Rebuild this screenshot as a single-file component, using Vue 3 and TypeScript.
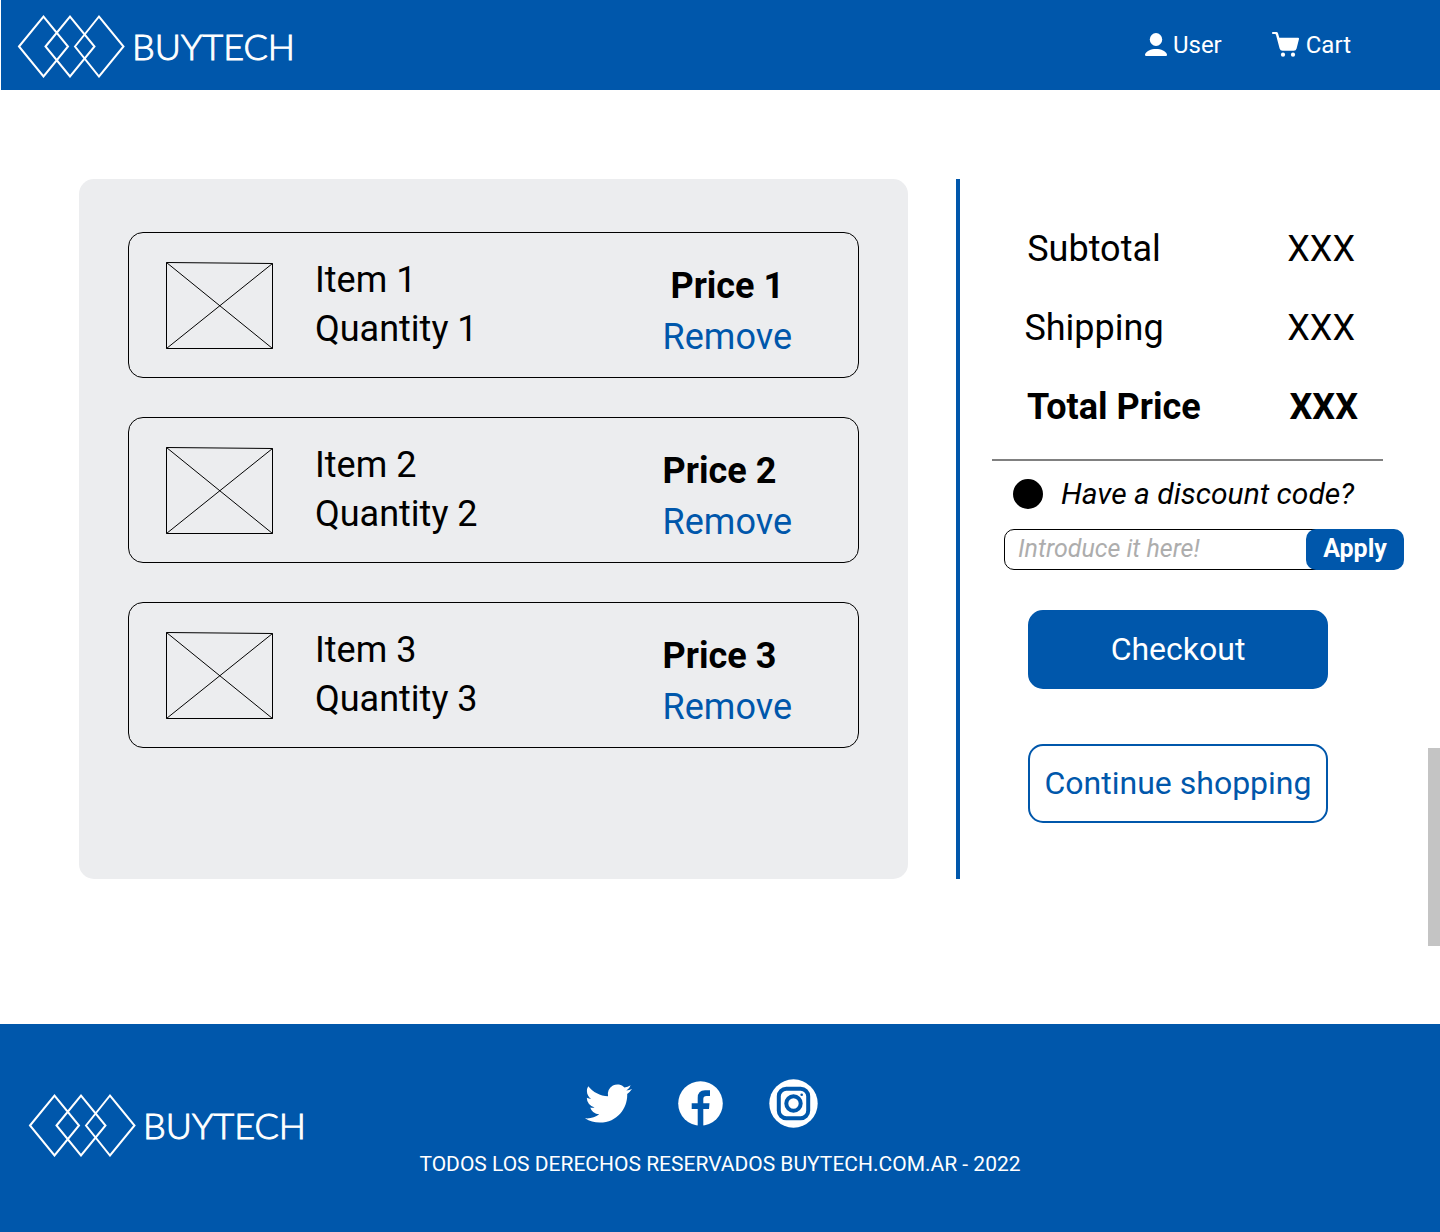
<script setup lang="ts">
import { ref } from 'vue'

interface CartItem {
  id: number
  name: string
  quantity: string
  price: string
  align: 'center' | 'start'
}

interface SummaryLine {
  label: string
  value: string
  total: boolean
}

const items = ref<CartItem[]>([
  { id: 1, name: 'Item 1', quantity: 'Quantity 1', price: 'Price 1', align: 'center' },
  { id: 2, name: 'Item 2', quantity: 'Quantity 2', price: 'Price 2', align: 'start' },
  { id: 3, name: 'Item 3', quantity: 'Quantity 3', price: 'Price 3', align: 'start' },
])

const summary: SummaryLine[] = [
  { label: 'Subtotal', value: 'XXX', total: false },
  { label: 'Shipping', value: 'XXX', total: false },
  { label: 'Total Price', value: 'XXX', total: true },
]

const hasDiscount = ref(true)
const discountCode = ref('')

function removeItem(id: number): void {
  items.value = items.value.filter((item) => item.id !== id)
}
</script>

<template>
  <div class="page">
    <header class="header">
      <a class="logo" href="#">
        <svg class="logo-mark" viewBox="0 0 108 64" aria-hidden="true">
          <path d="M2 32.500 26.500 2.500 51 32.500 26.500 62.500Z M28.500 32.500 53 2.500 77.500 32.500 53 62.500Z M58 32.500 82 2.500 106.500 32.500 82 62.500Z" />
        </svg>
        <span class="logo-text">BUYTECH</span>
      </a>
      <nav class="nav">
        <a class="nav-link" href="#">
          <svg width="22" height="24" viewBox="0 0 22 24" aria-hidden="true">
            <ellipse cx="11" cy="6.500" rx="6.200" ry="6.500" />
            <path d="M0 21.500C1 18 6 16 11 16s10 2 11 5.500c0 1-.5 1.500-1.500 1.500h-19C.5 23 0 22.500 0 21.500Z" />
          </svg>
          User
        </a>
        <a class="nav-link" href="#">
          <svg width="28" height="28" viewBox="0 0 28 28" aria-hidden="true">
            <path d="M.8 1H4.500Q5.600 1 6 2.200L7.300 6.800H26Q27.300 6.800 27 8.100L24.600 17.500Q24 19.800 21.800 19.800H10.500Q8.300 19.800 7.600 17.600L4.100 4.200Q3.800 2.900 3 2.900H.8Q0 2.900 0 2T.8 1Z" />
            <circle cx="11" cy="23.700" r="2.100" />
            <circle cx="21" cy="23.700" r="2.100" />
          </svg>
          Cart
        </a>
      </nav>
    </header>

    <main class="main">
      <section class="cart" aria-label="Cart">
        <article v-for="item in items" :key="item.id" class="card">
          <svg class="thumb" viewBox="0 0 107 87" aria-hidden="true">
            <path d="M.5 .5 106.500 1.500V86.500H.5ZL106.500 86.500M.5 86.500 106.500 1.500" />
          </svg>
          <div class="info">
            <span>{{ item.name }}</span>
            <span>{{ item.quantity }}</span>
          </div>
          <div class="cost">
            <strong :class="['price', item.align]">{{ item.price }}</strong>
            <button class="remove" type="button" @click="removeItem(item.id)">Remove</button>
          </div>
        </article>
      </section>

      <aside class="summary">
        <dl class="totals">
          <div v-for="line in summary" :key="line.label" :class="['line', { total: line.total }]">
            <dt>{{ line.label }}</dt>
            <dd>{{ line.value }}</dd>
          </div>
        </dl>
        <label class="discount">
          <input v-model="hasDiscount" type="checkbox" />
          Have a discount code?
        </label>
        <form class="code" @submit.prevent>
          <input v-model="discountCode" type="text" aria-label="Discount code" placeholder="Introduce it here!" />
          <button type="submit">Apply</button>
        </form>
        <div class="actions">
          <button class="action primary" type="button">Checkout</button>
          <button class="action" type="button">Continue shopping</button>
        </div>
      </aside>
      <div class="scroll-thumb"></div>
    </main>

    <footer class="footer">
      <a class="logo" href="#">
        <svg class="logo-mark" viewBox="0 0 108 64" aria-hidden="true">
          <path d="M2 32.500 26.500 2.500 51 32.500 26.500 62.500Z M28.500 32.500 53 2.500 77.500 32.500 53 62.500Z M58 32.500 82 2.500 106.500 32.500 82 62.500Z" />
        </svg>
        <span class="logo-text">BUYTECH</span>
      </a>
      <div class="footer-center">
        <div class="social">
          <a href="#" aria-label="Twitter">
            <svg width="47" height="47" viewBox="0 0 24 24">
              <path d="M23.953 4.570a10 10 0 01-2.825.775 4.958 4.958 0 002.163-2.723c-.951.555-2.005.959-3.127 1.184a4.920 4.920 0 00-8.384 4.482C7.690 8.095 4.067 6.130 1.640 3.162a4.822 4.822 0 00-.666 2.475c0 1.710.870 3.213 2.188 4.096a4.904 4.904 0 01-2.228-.616v.060a4.923 4.923 0 003.946 4.827 4.996 4.996 0 01-2.212.085 4.936 4.936 0 004.604 3.417 9.867 9.867 0 01-6.102 2.105c-.390 0-.779-.023-1.170-.067a13.995 13.995 0 007.557 2.209c9.053 0 13.998-7.496 13.998-13.985 0-.210 0-.420-.015-.630A9.935 9.935 0 0024 4.590z" />
            </svg>
          </a>
          <a href="#" aria-label="Facebook">
            <svg width="45" height="45" viewBox="0 0 45 45">
              <circle cx="22.500" cy="22.500" r="22.300" />
              <path class="cut" d="M19.700 45V28H13.700V22.300H19.700V17Q19.700 9.300 27 9.300H32V15H28.500Q25.300 15 25.300 18V22.300H31.500L31 28H25.300V45Z" />
            </svg>
          </a>
          <a href="#" aria-label="Instagram">
            <svg width="49" height="49" viewBox="0 0 49 49">
              <circle cx="24.500" cy="24.500" r="24.200" />
              <rect class="ring" x="9.800" y="9.800" width="29.400" height="29.400" rx="7.500" />
              <circle class="ring" cx="24.500" cy="24.500" r="7.200" />
              <circle class="cut" cx="32.700" cy="15.800" r="1.300" />
            </svg>
          </a>
        </div>
        <p class="rights">TODOS LOS DERECHOS RESERVADOS BUYTECH.COM.AR - 2022</p>
      </div>
    </footer>
  </div>
</template>

<style>
body {
  margin: 0;
  background: #fff;
}
</style>

<style scoped>
.page {
  --blue: #0057ab;
  display: flex;
  flex-direction: column;
  min-height: 100vh;
  font-family: Roboto, sans-serif;
  color: #000;
}

.page *,
.page *::before {
  box-sizing: border-box;
}

button,
input {
  margin: 0;
  font-family: inherit;
}

button {
  cursor: pointer;
}

a {
  color: inherit;
  text-decoration: none;
}

.header {
  display: flex;
  align-items: center;
  justify-content: space-between;
  height: 90px;
  margin-left: 1px;
  padding: 2px 89px 0 16px;
  background: var(--blue);
  color: #fff;
}

.logo {
  display: flex;
  align-items: center;
  gap: 7px;
}

.logo-mark {
  width: 108px;
  height: 64px;
  fill: none;
  stroke: #fff;
  stroke-width: 2;
}

.logo-text {
  font-family: Lato, sans-serif;
  font-size: 36px;
  font-weight: 300;
  line-height: 48px;
  -webkit-text-stroke: 1px #fff;
}

.nav {
  display: flex;
  gap: 50px;
  margin-top: -2px;
}

.nav-link {
  display: flex;
  align-items: center;
  gap: 6px;
  font-size: 24px;
  line-height: 28px;
}

.nav-link svg {
  fill: #fff;
}

.main {
  position: relative;
  display: flex;
  flex: 1;
  align-items: flex-start;
  gap: 48px;
  padding: 89px 0 145px 79px;
}

.cart {
  display: flex;
  flex: 1;
  flex-direction: column;
  gap: 39px;
  min-height: 700px;
  padding: 53px 49px;
  border-radius: 15px;
  background: #ecedef;
}

.card {
  display: flex;
  align-items: flex-start;
  height: 146px;
  padding: 0 66px 0 37px;
  border: 1px solid #000;
  border-radius: 15px;
  font-size: 36px;
}

.thumb {
  width: 107px;
  height: 87px;
  margin-top: 29px;
  fill: none;
  stroke: #000;
  stroke-width: 1;
}

.info {
  display: flex;
  flex-direction: column;
  margin: 23px auto 0 42px;
  line-height: 49px;
}

.cost {
  display: flex;
  flex-direction: column;
  margin-top: 28px;
  line-height: 51px;
}

.price {
  font-weight: 700;
}

.center {
  text-align: center;
}

.start {
  text-align: left;
}

.remove {
  padding: 0;
  border: 0;
  background: none;
  color: var(--blue);
  font-size: 36px;
  line-height: 51px;
}

.summary {
  display: flex;
  flex: 0 0 484px;
  flex-direction: column;
  align-items: flex-start;
  min-height: 700px;
  padding: 31px 32px 0;
  border-left: 4px solid var(--blue);
}

.totals {
  width: 391px;
  margin: 0;
  padding-bottom: 12px;
  border-bottom: 2px solid #808080;
  font-size: 36px;
  line-height: 79px;
}

.line {
  display: flex;
  justify-content: space-between;
  padding: 0 28px 0 32px;
}

.line dt {
  min-width: 140px;
  text-align: center;
}

.line dd {
  margin: 0;
}

.total {
  padding: 0 25px 0 35px;
  font-weight: 700;
}

.discount {
  display: flex;
  align-items: center;
  gap: 18px;
  margin: 15px 0 17px 21px;
  font-size: 30px;
  font-style: italic;
  line-height: 36px;
}

.discount input {
  appearance: none;
  width: 30px;
  height: 30px;
  border: 2px solid #000;
  border-radius: 50%;
}

.discount input:checked {
  background: #000;
}

.code {
  display: flex;
  width: 400px;
  height: 41px;
  margin-left: 12px;
}

.code input {
  flex: 1;
  min-width: 0;
  margin-right: -20px;
  padding: 0 28px 2px 13px;
  border: 1px solid #000;
  border-radius: 10px;
  outline: 0;
  background: #fff;
  font-size: 25px;
}

.code input::placeholder {
  color: #adadad;
  font-style: italic;
  opacity: 1;
}

.code button {
  position: relative;
  width: 98px;
  padding: 0 0 2px;
  border: 0;
  border-radius: 10px;
  background: var(--blue);
  color: #fff;
  font-size: 25px;
  font-weight: 700;
}

.actions {
  display: flex;
  flex-direction: column;
  gap: 55px;
  margin: 40px 0 0 36px;
}

.action {
  width: 300px;
  height: 79px;
  padding: 0 0 2px;
  border: 2px solid var(--blue);
  border-radius: 15px;
  background: #fff;
  color: var(--blue);
  font-size: 32px;
}

.primary {
  background: var(--blue);
  color: #fff;
}

.scroll-thumb {
  position: absolute;
  top: 658px;
  right: 0;
  width: 12px;
  height: 198px;
  background: #c4c4c4;
}

.footer {
  display: grid;
  grid-template-columns: 1fr auto 1fr;
  align-items: start;
  min-height: 208px;
  background: var(--blue);
  color: #fff;
}

.footer .logo {
  margin: 69px 0 0 28px;
}

.footer-center {
  display: flex;
  flex-direction: column;
  align-items: center;
  padding-top: 55px;
}

.social {
  display: flex;
  align-items: center;
  gap: 46px;
  margin-right: 37px;
}

.social a {
  display: flex;
}

.social svg {
  fill: #fff;
}

.social .cut {
  fill: var(--blue);
}

.social .ring {
  fill: none;
  stroke: var(--blue);
  stroke-width: 4;
}

.rights {
  margin: 24px 0 0;
  font-size: 21px;
  line-height: 24px;
}
</style>
